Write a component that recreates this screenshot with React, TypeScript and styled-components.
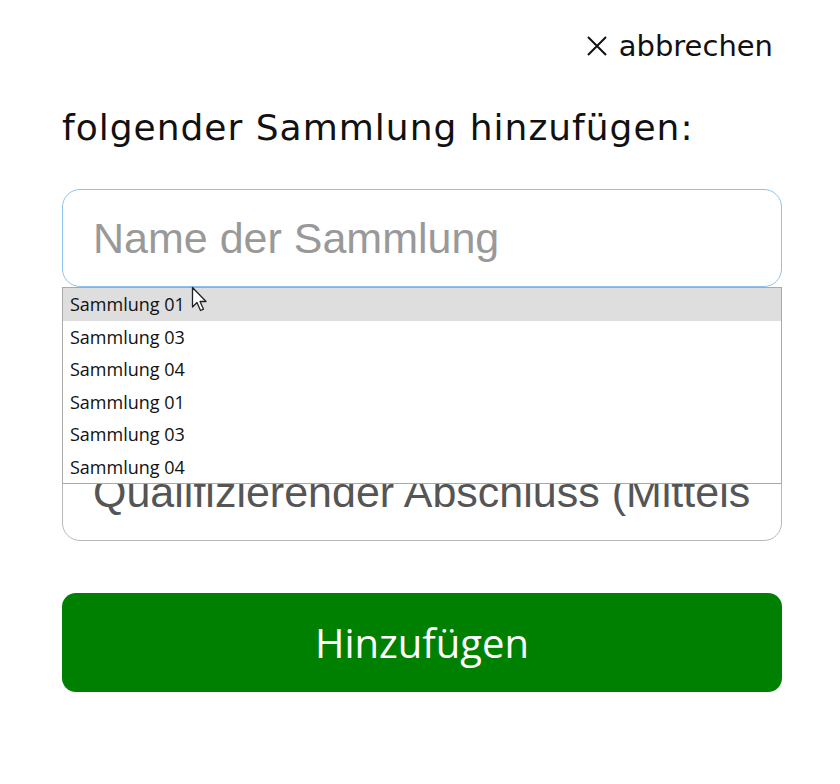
import styled, { createGlobalStyle } from "styled-components";

const GlobalStyle = createGlobalStyle`
  html, body {
    margin: 0;
    padding: 0;
    background: #ffffff;
  }
  body {
    font-family: "DejaVu Sans", "Noto Sans", sans-serif;
  }
`;

const collections = [
  "Sammlung 01",
  "Sammlung 03",
  "Sammlung 04",
  "Sammlung 01",
  "Sammlung 03",
  "Sammlung 04",
];

const App = () => {
  return (
    <>
      <GlobalStyle />
      <Page>
        <TopBar>
          <CancelBtn>
            <svg width="22" height="22" viewBox="0 0 22 22">
              <path
                d="M2 2 L20 20 M20 2 L2 20"
                stroke="#111"
                strokeWidth="2"
                fill="none"
              />
            </svg>
            abbrechen
          </CancelBtn>
        </TopBar>
        <Title>folgender Sammlung hinzufügen:</Title>
        <Field>
          <NameInput placeholder="Name der Sammlung" />
          <Suggestions>
            {collections.map((name, i) => (
              <Suggestion key={i} $active={i === 0}>
                {name}
              </Suggestion>
            ))}
          </Suggestions>
          <Cursor width="20" height="28" viewBox="0 0 20 28">
            <path
              d="M1.5 1.5 L1.5 21 L6 16.5 L9.5 24.5 L12.5 23.2 L9 15.5 L15 15.5 Z"
              fill="#fff"
              stroke="#222"
              strokeWidth="1.3"
              strokeLinejoin="round"
            />
          </Cursor>
        </Field>
        <SecondInput
          defaultValue="Qualifizierender Abschluss (Mittelschule)"
          readOnly
        />
        <AddButton>Hinzufügen</AddButton>
      </Page>
    </>
  );
};

export default App;

const Page = styled.div`
  width: 720px;
  padding: 26px 0 0 62px;
  display: flex;
  flex-direction: column;
`;

const TopBar = styled.div`
  display: flex;
  justify-content: flex-end;
  padding-right: 9px;
`;

const CancelBtn = styled.button`
  display: flex;
  align-items: center;
  gap: 11px;
  padding: 0;
  border: none;
  background: none;
  color: #111;
  font-family: "DejaVu Sans", sans-serif;
  font-size: 29px;
  line-height: 40px;
  cursor: pointer;
`;

const Title = styled.h2`
  margin: 37px 0 36px;
  font-family: "DejaVu Sans", sans-serif;
  font-weight: 400;
  font-size: 36px;
  letter-spacing: 1px;
  line-height: 50px;
  color: #111;
`;

const Field = styled.div`
  position: relative;
`;

const inputBase = `
  box-sizing: border-box;
  width: 720px;
  height: 98px;
  padding: 0 30px;
  border-radius: 18px;
  background: #fff;
  font-family: "Liberation Sans", Arial, sans-serif;
  font-size: 43px;
  outline: none;
`;

const NameInput = styled.input`
  ${inputBase}
  display: block;
  border: 1px solid #8fc3ee;
  color: #333;

  &::placeholder {
    color: #999;
  }
`;

const SecondInput = styled.input`
  ${inputBase}
  display: block;
  margin-top: 156px;
  border: 1px solid #b8b8b8;
  color: #555;
`;

const Suggestions = styled.ul`
  position: absolute;
  top: 98px;
  left: 0;
  z-index: 2;
  box-sizing: border-box;
  width: 720px;
  margin: 0;
  padding: 0;
  list-style: none;
  background: #fff;
  border: 1px solid #a9a9a9;
`;

const Suggestion = styled.li<{ $active?: boolean }>`
  height: 32.5px;
  padding-left: 7px;
  display: flex;
  align-items: center;
  background: ${(p) => (p.$active ? "#dedede" : "#fff")};
  color: #111;
  font-family: "Open Sans", "Noto Sans", sans-serif;
  font-size: 18px;
`;

const Cursor = styled.svg`
  position: absolute;
  top: 97px;
  left: 129px;
  z-index: 3;
`;

const AddButton = styled.button`
  box-sizing: border-box;
  width: 720px;
  height: 99px;
  margin-top: 52px;
  border: none;
  border-radius: 14px;
  background: #008000;
  color: #fff;
  font-family: "Open Sans", "Noto Sans", sans-serif;
  font-size: 40px;
  cursor: pointer;
`;
